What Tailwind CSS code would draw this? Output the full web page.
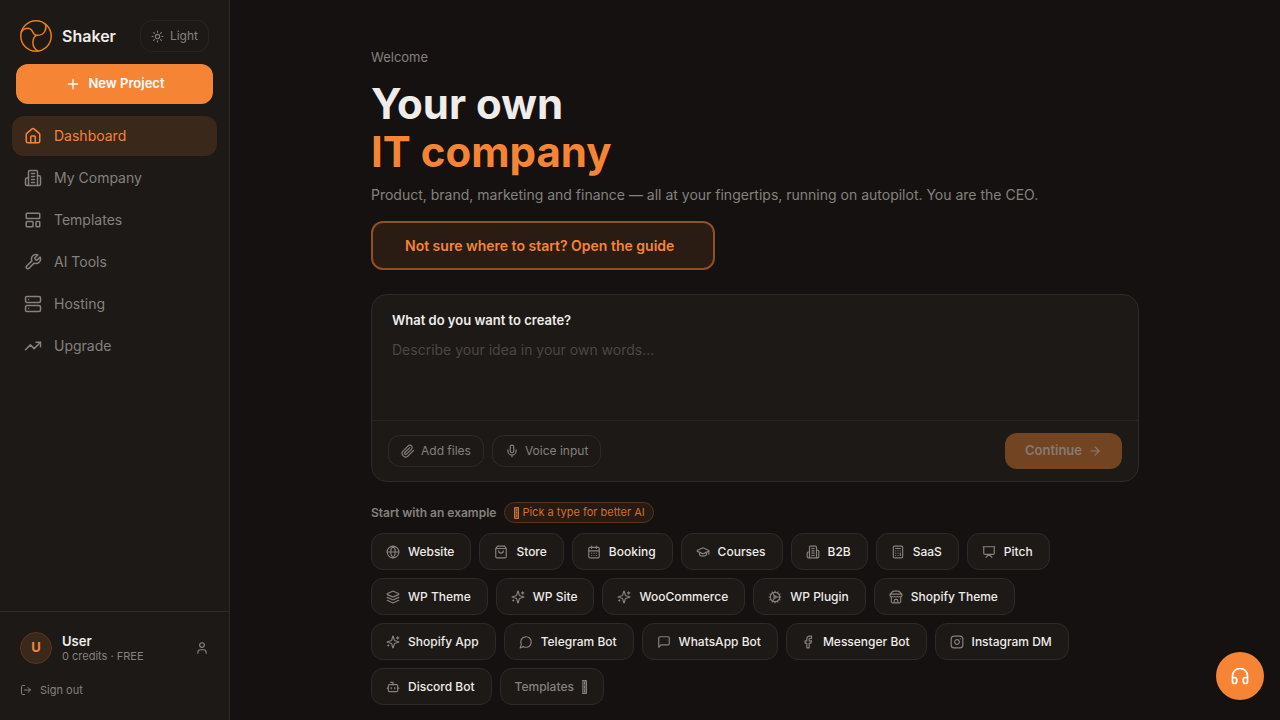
<!DOCTYPE html>
<html lang="en">
<head>
    <meta charset="UTF-8">
    <meta name="viewport" content="width=device-width, initial-scale=1.0">
    <title>Shaker</title>
    <script src="https://cdn.jsdelivr.net/npm/@tailwindcss/browser@4"></script>
</head>
<body class="bg-[#141110] text-[#f0ece9] font-['Inter',sans-serif]">
    <!-- Icon sprite -->
    <svg class="hidden" xmlns="http://www.w3.org/2000/svg">
        <symbol id="sun" viewBox="0 0 24 24"><circle cx="12" cy="12" r="4"/><path d="M12 2v2M12 20v2M4.93 4.93l1.41 1.41M17.66 17.66l1.41 1.41M2 12h2M20 12h2M6.34 17.66l-1.41 1.41M19.07 4.93l-1.41 1.41"/></symbol>
        <symbol id="plus" viewBox="0 0 24 24"><path d="M5 12h14M12 5v14"/></symbol>
        <symbol id="house" viewBox="0 0 24 24"><path d="M15 21v-8a1 1 0 0 0-1-1h-4a1 1 0 0 0-1 1v8"/><path d="M3 10a2 2 0 0 1 .709-1.528l7-5.999a2 2 0 0 1 2.582 0l7 5.999A2 2 0 0 1 21 10v9a2 2 0 0 1-2 2H5a2 2 0 0 1-2-2z"/></symbol>
        <symbol id="building" viewBox="0 0 24 24"><path d="M6 22V4a2 2 0 0 1 2-2h8a2 2 0 0 1 2 2v18Z"/><path d="M6 12H4a2 2 0 0 0-2 2v6a2 2 0 0 0 2 2h2M18 9h2a2 2 0 0 1 2 2v9a2 2 0 0 1-2 2h-2M10 6h4M10 10h4M10 14h4M10 18h4"/></symbol>
        <symbol id="layout" viewBox="0 0 24 24"><rect width="18" height="7" x="3" y="3" rx="1"/><rect width="9" height="7" x="3" y="14" rx="1"/><rect width="5" height="7" x="16" y="14" rx="1"/></symbol>
        <symbol id="wrench" viewBox="0 0 24 24"><path d="M14.7 6.3a1 1 0 0 0 0 1.4l1.6 1.6a1 1 0 0 0 1.4 0l3.77-3.77a6 6 0 0 1-7.94 7.94l-6.91 6.91a2.12 2.12 0 0 1-3-3l6.91-6.91a6 6 0 0 1 7.94-7.94l-3.76 3.76z"/></symbol>
        <symbol id="server" viewBox="0 0 24 24"><rect width="20" height="8" x="2" y="2" rx="2"/><rect width="20" height="8" x="2" y="14" rx="2"/><path d="M6 6h.01M6 18h.01"/></symbol>
        <symbol id="trending" viewBox="0 0 24 24"><path d="m22 7-8.5 8.5-5-5L2 17"/><path d="M16 7h6v6"/></symbol>
        <symbol id="user" viewBox="0 0 24 24"><path d="M19 21v-2a4 4 0 0 0-4-4H9a4 4 0 0 0-4 4v2"/><circle cx="12" cy="7" r="4"/></symbol>
        <symbol id="logout" viewBox="0 0 24 24"><path d="M9 21H5a2 2 0 0 1-2-2V5a2 2 0 0 1 2-2h4M16 17l5-5-5-5M21 12H9"/></symbol>
        <symbol id="clip" viewBox="0 0 24 24"><path d="m21.44 11.05-9.19 9.19a6 6 0 0 1-8.49-8.49l8.57-8.57A4 4 0 1 1 18 8.84l-8.59 8.57a2 2 0 0 1-2.83-2.83l8.49-8.48"/></symbol>
        <symbol id="mic" viewBox="0 0 24 24"><path d="M12 2a3 3 0 0 0-3 3v7a3 3 0 0 0 6 0V5a3 3 0 0 0-3-3Z"/><path d="M19 10v2a7 7 0 0 1-14 0v-2M12 19v3"/></symbol>
        <symbol id="arrow" viewBox="0 0 24 24"><path d="M5 12h14M12 5l7 7-7 7"/></symbol>
        <symbol id="globe" viewBox="0 0 24 24"><circle cx="12" cy="12" r="10"/><path d="M12 2a14.5 14.5 0 0 0 0 20 14.5 14.5 0 0 0 0-20M2 12h20"/></symbol>
        <symbol id="bag" viewBox="0 0 24 24"><path d="M6 2 3 6v14a2 2 0 0 0 2 2h14a2 2 0 0 0 2-2V6l-3-4ZM3 6h18M16 10a4 4 0 0 1-8 0"/></symbol>
        <symbol id="calendar" viewBox="0 0 24 24"><path d="M8 2v4M16 2v4M3 10h18"/><rect width="18" height="18" x="3" y="4" rx="2"/><path d="M8 14h.01M12 14h.01M16 14h.01M8 18h.01M12 18h.01M16 18h.01"/></symbol>
        <symbol id="cap" viewBox="0 0 24 24"><path d="M21.42 10.922a1 1 0 0 0-.019-1.838L12.83 5.18a2 2 0 0 0-1.66 0L2.6 9.08a1 1 0 0 0 0 1.832l8.57 3.908a2 2 0 0 0 1.66 0z"/><path d="M22 10v6M6 12.5V16a6 3 0 0 0 12 0v-3.5"/></symbol>
        <symbol id="calculator" viewBox="0 0 24 24"><rect width="16" height="20" x="4" y="2" rx="2"/><path d="M8 6h8M16 14v4M16 10h.01M12 10h.01M8 10h.01M12 14h.01M8 14h.01M12 18h.01M8 18h.01"/></symbol>
        <symbol id="presentation" viewBox="0 0 24 24"><path d="M2 3h20M21 3v11a2 2 0 0 1-2 2H5a2 2 0 0 1-2-2V3M7 21l5-5 5 5"/></symbol>
        <symbol id="layers" viewBox="0 0 24 24"><path d="m12.83 2.18a2 2 0 0 0-1.66 0L2.6 6.08a1 1 0 0 0 0 1.83l8.58 3.91a2 2 0 0 0 1.66 0l8.58-3.9a1 1 0 0 0 0-1.83Z"/><path d="m22 17.65-9.17 4.16a2 2 0 0 1-1.66 0L2 17.65M22 12.65l-9.17 4.16a2 2 0 0 1-1.66 0L2 12.65"/></symbol>
        <symbol id="sparkles" viewBox="0 0 24 24"><path d="M9.937 15.5A2 2 0 0 0 8.5 14.063l-6.135-1.582a.5.5 0 0 1 0-.962L8.5 9.936A2 2 0 0 0 9.937 8.5l1.582-6.135a.5.5 0 0 1 .963 0L14.063 8.5A2 2 0 0 0 15.5 9.937l6.135 1.581a.5.5 0 0 1 0 .964L15.5 14.063a2 2 0 0 0-1.437 1.437l-1.582 6.135a.5.5 0 0 1-.963 0z"/><path d="M20 3v4M22 5h-4M4 17v2M5 18H3"/></symbol>
        <symbol id="cog" viewBox="0 0 24 24"><circle cx="12" cy="12" r="8"/><circle cx="12" cy="12" r="2"/><path d="M12 2v2M12 22v-2M17 20.66l-1-1.73M11 10.27 7 3.34M20.66 17l-1.73-1M3.34 7l1.73 1M14 12h8M2 12h2M20.66 7l-1.73 1M3.34 17l1.73-1M17 3.34l-1 1.73M11 13.73l-4 6.93"/></symbol>
        <symbol id="store" viewBox="0 0 24 24"><path d="m2 7 4.41-4.41A2 2 0 0 1 7.83 2h8.34a2 2 0 0 1 1.42.59L22 7M4 12v8a2 2 0 0 0 2 2h12a2 2 0 0 0 2-2v-8M15 22v-4a2 2 0 0 0-2-2h-2a2 2 0 0 0-2 2v4M2 7h20"/><path d="M22 7v3a2 2 0 0 1-2 2 2.7 2.7 0 0 1-1.59-.63.7.7 0 0 0-.82 0A2.7 2.7 0 0 1 16 12a2.7 2.7 0 0 1-1.59-.63.7.7 0 0 0-.82 0A2.7 2.7 0 0 1 12 12a2.7 2.7 0 0 1-1.59-.63.7.7 0 0 0-.82 0A2.7 2.7 0 0 1 8 12a2.7 2.7 0 0 1-1.59-.63.7.7 0 0 0-.82 0A2.7 2.7 0 0 1 4 12a2 2 0 0 1-2-2V7"/></symbol>
        <symbol id="circle-msg" viewBox="0 0 24 24"><path d="M7.9 20A9 9 0 1 0 4 16.1L2 22Z"/></symbol>
        <symbol id="square-msg" viewBox="0 0 24 24"><path d="M21 15a2 2 0 0 1-2 2H7l-4 4V5a2 2 0 0 1 2-2h14a2 2 0 0 1 2 2z"/></symbol>
        <symbol id="facebook" viewBox="0 0 24 24"><path d="M18 2h-3a5 5 0 0 0-5 5v3H7v4h3v8h4v-8h3l1-4h-4V7a1 1 0 0 1 1-1h3z"/></symbol>
        <symbol id="instagram" viewBox="0 0 24 24"><rect width="20" height="20" x="2" y="2" rx="5"/><path d="M16 11.37A4 4 0 1 1 12.63 8 4 4 0 0 1 16 11.37zM17.5 6.5h.01"/></symbol>
        <symbol id="bot" viewBox="0 0 24 24"><path d="M12 8V4H8"/><rect width="16" height="12" x="4" y="8" rx="2"/><path d="M2 14h2M20 14h2M15 13v2M9 13v2"/></symbol>
        <symbol id="headphones" viewBox="0 0 24 24"><path d="M3 14h3a2 2 0 0 1 2 2v3a2 2 0 0 1-2 2H5a2 2 0 0 1-2-2v-7a9 9 0 0 1 18 0v7a2 2 0 0 1-2 2h-1a2 2 0 0 1-2-2v-3a2 2 0 0 1 2-2h3"/></symbol>
    </svg>

    <div class="flex h-screen overflow-hidden">
        <aside class="flex w-[230px] shrink-0 flex-col border-r border-[#2d2a28] bg-[#1c1917]">
            <div class="flex items-center justify-between pt-5 pr-5 pb-3 pl-5">
                <a href="#" class="flex items-center gap-2.5">
                    <svg class="size-8 fill-none stroke-[#ee7d14] stroke-[1.5]" viewBox="0 0 32 32">
                        <circle cx="16" cy="16" r="15.2"/>
                        <path d="M.9 12.6C2.500 9.600 5 8.200 8 8.200C11.500 8.400 12.500 11 13.400 13.200C14.200 14.800 15.300 15.400 16.700 15.200"/>
                        <path d="M16.700 15.200C20.500 15.600 23.500 13.800 25 11C26.300 8.500 26.200 6 25.200 3.800"/>
                        <path d="M16.700 15.200C14.200 16.800 12.800 19.500 12.900 22.700C13 26.500 15 29.600 18.400 31"/>
                    </svg>
                    <span class="text-base font-semibold">Shaker</span>
                </a>
                <button type="button" class="flex h-8 items-center gap-1.5 rounded-xl border border-[#272422] px-2.5 text-xs text-[#86817d]">
                    <svg class="size-[13px] fill-none stroke-current stroke-2 [stroke-linecap:round]"><use href="#sun"/></svg>
                    Light
                </button>
            </div>
            <button type="button" class="mx-4 flex h-10 items-center justify-center gap-2 rounded-xl bg-[#f58535] text-[13px] font-semibold text-white">
                <svg class="size-4 fill-none stroke-current stroke-2 [stroke-linecap:round]"><use href="#plus"/></svg>
                New Project
            </button>
            <nav class="flex flex-1 flex-col gap-0.5 px-3 pt-3 text-sm text-[#86817d] [&_a]:flex [&_a]:h-10 [&_a]:items-center [&_a]:gap-3 [&_a]:rounded-xl [&_a]:px-3 [&_svg]:size-[18px] [&_svg]:fill-none [&_svg]:stroke-current [&_svg]:stroke-2 [&_svg]:[stroke-linecap:round] [&_svg]:[stroke-linejoin:round]">
                <a href="#" class="bg-[#3a281b] text-[#f58535]"><svg><use href="#house"/></svg>Dashboard</a>
                <a href="#"><svg><use href="#building"/></svg>My Company</a>
                <a href="#"><svg><use href="#layout"/></svg>Templates</a>
                <a href="#"><svg><use href="#wrench"/></svg>AI Tools</a>
                <a href="#"><svg><use href="#server"/></svg>Hosting</a>
                <a href="#"><svg><use href="#trending"/></svg>Upgrade</a>
            </nav>
            <div class="border-t border-[#2d2a28] px-5 pt-5 pb-5 text-[#86817d]">
                <div class="flex items-center gap-2.5">
                    <div class="flex size-8 items-center justify-center rounded-full border border-[#5a341c] bg-[#3a281b] text-[13px] font-bold text-[#f58535]">U</div>
                    <div class="flex-1">
                        <div class="text-[13px] leading-4 font-semibold text-[#f0ece9]">User</div>
                        <div class="text-[11px] leading-[14px]">0 credits · FREE</div>
                    </div>
                    <a href="#" aria-label="Profile"><svg class="size-3.5 fill-none stroke-current stroke-2 [stroke-linecap:round]"><use href="#user"/></svg></a>
                </div>
                <button type="button" class="mt-4 flex h-5 items-center gap-2 text-[11px]">
                    <svg class="size-3 fill-none stroke-current stroke-2 [stroke-linecap:round] [stroke-linejoin:round]"><use href="#logout"/></svg>
                    Sign out
                </button>
            </div>
        </aside>

        <main class="flex-1 overflow-hidden">
            <div class="mx-auto max-w-3xl pt-12">
                <p class="text-[13px] leading-[18px] text-[#86817d]">Welcome</p>
                <h1 class="mt-3.5 text-[42px] leading-12 font-bold">Your own<br><span class="text-[#f58535]">IT company</span></h1>
                <p class="mt-2 text-sm leading-[22px] text-[#86817d]">Product, brand, marketing and finance — all at your fingertips, running on autopilot. You are the CEO.</p>
                <button type="button" class="mt-[15px] h-[49px] rounded-xl border-2 border-[#924f24] bg-[#2b1c13] pr-[39px] pl-8 text-sm font-semibold text-[#f58535]">Not sure where to start? Open the guide</button>

                <form class="mt-6 rounded-2xl border border-[#2d2a28] bg-[#1c1917]">
                    <div class="flex h-[125px] flex-col px-5 pt-4">
                        <label for="idea" class="text-[13px] leading-[18px] font-semibold">What do you want to create?</label>
                        <textarea id="idea" placeholder="Describe your idea in your own words..." class="mt-2.5 flex-1 resize-none text-sm leading-[22px] outline-none placeholder:text-[#4b4744]"></textarea>
                    </div>
                    <div class="flex items-center gap-2 border-t border-[#272422] px-4 py-3 text-xs text-[#86817d]">
                        <button type="button" class="flex h-8 items-center gap-1.5 rounded-xl border border-[#2d2a28] px-3">
                            <svg class="size-3.5 fill-none stroke-current stroke-2 [stroke-linecap:round] [stroke-linejoin:round]"><use href="#clip"/></svg>
                            Add files
                        </button>
                        <button type="button" class="flex h-8 items-center gap-1.5 rounded-xl border border-[#2d2a28] px-3">
                            <svg class="size-3.5 fill-none stroke-current stroke-2 [stroke-linecap:round] [stroke-linejoin:round]"><use href="#mic"/></svg>
                            Voice input
                        </button>
                        <button type="submit" disabled class="ml-auto flex h-9 items-center gap-1.5 rounded-xl bg-[#734422] px-5 text-[13px] font-semibold text-[#857a74]">
                            Continue
                            <svg class="size-3.5 fill-none stroke-current stroke-2 [stroke-linecap:round] [stroke-linejoin:round]"><use href="#arrow"/></svg>
                        </button>
                    </div>
                </form>

                <div class="mt-5 flex items-center gap-2">
                    <span class="text-xs font-semibold text-[#86817d]">Start with an example</span>
                    <span class="flex h-[21px] items-center gap-[3px] rounded-full border border-[#5a341c] bg-[#271a12] pr-2 pl-[9px] text-[11px] text-[#d0712f]">
                        <svg class="h-3 w-[5px] fill-[#d0712f]/50 stroke-current" viewBox="0 0 5 12"><path d="M.5 .5h4v11h-4zM2.500 2v1.500M2.500 5v1.500M2.500 8v1.500"/></svg>
                        Pick a type for better AI
                    </span>
                </div>
                <div class="mt-2.5 flex flex-wrap gap-2 text-xs font-medium [&_button]:flex [&_button]:h-[37px] [&_button]:items-center [&_button]:gap-2 [&_button]:rounded-xl [&_button]:border [&_button]:border-[#2d2a28] [&_button]:bg-[#1c1917] [&_button]:pr-4 [&_button]:pl-3.5 [&_use]:fill-none [&_svg]:size-3.5 [&_svg]:stroke-[#86817d] [&_use]:stroke-2 [&_svg]:[stroke-linecap:round] [&_svg]:[stroke-linejoin:round]">
                    <button type="button"><svg><use href="#globe"/></svg>Website</button>
                    <button type="button"><svg><use href="#bag"/></svg>Store</button>
                    <button type="button"><svg><use href="#calendar"/></svg>Booking</button>
                    <button type="button"><svg><use href="#cap"/></svg>Courses</button>
                    <button type="button"><svg><use href="#building"/></svg>B2B</button>
                    <button type="button"><svg><use href="#calculator"/></svg>SaaS</button>
                    <button type="button"><svg><use href="#presentation"/></svg>Pitch</button>
                    <button type="button"><svg><use href="#layers"/></svg>WP Theme</button>
                    <button type="button"><svg><use href="#sparkles"/></svg>WP Site</button>
                    <button type="button"><svg><use href="#sparkles"/></svg>WooCommerce</button>
                    <button type="button"><svg><use href="#cog"/></svg>WP Plugin</button>
                    <button type="button"><svg><use href="#store"/></svg>Shopify Theme</button>
                    <button type="button"><svg><use href="#sparkles"/></svg>Shopify App</button>
                    <button type="button"><svg><use href="#circle-msg"/></svg>Telegram Bot</button>
                    <button type="button"><svg><use href="#square-msg"/></svg>WhatsApp Bot</button>
                    <button type="button"><svg><use href="#facebook"/></svg>Messenger Bot</button>
                    <button type="button"><svg><use href="#instagram"/></svg>Instagram DM</button>
                    <button type="button"><svg><use href="#bot"/></svg>Discord Bot</button>
                    <button type="button" class="text-[#86817d]">
                        Templates
                        <svg class="h-3.5! w-[5px]! fill-[#86817d]/50" viewBox="0 0 5 14"><path d="M.5 .5h4v13h-4zM2.500 2v2M2.500 6v2M2.500 10v2"/></svg>
                    </button>
                </div>
            </div>
        </main>
    </div>

    <button type="button" aria-label="Support" class="fixed right-4 bottom-5 flex size-12 items-center justify-center rounded-full bg-[#f58535] text-white">
        <svg class="size-5 fill-none stroke-current stroke-2 [stroke-linecap:round] [stroke-linejoin:round]"><use href="#headphones"/></svg>
    </button>
</body>
</html>
